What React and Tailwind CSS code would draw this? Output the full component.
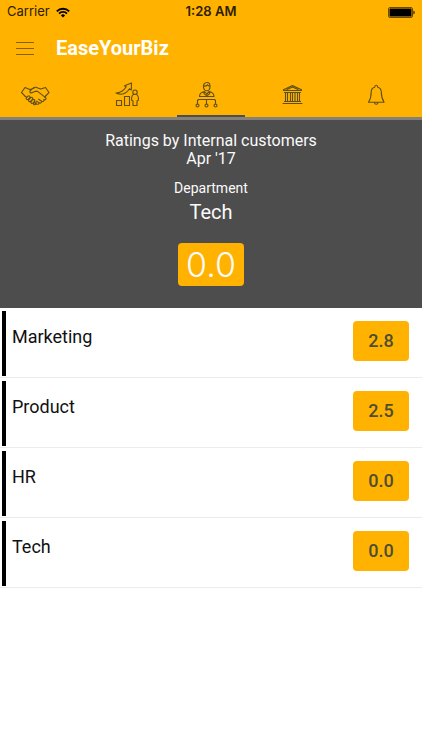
import { useState } from "react";
import clsx from "clsx";

const departments = [
  { id: 1, name: "Marketing", rating: "2.8" },
  { id: 2, name: "Product", rating: "2.5" },
  { id: 3, name: "HR", rating: "0.0" },
  { id: 4, name: "Tech", rating: "0.0" },
];

// every tab icon shares the same 36x28 canvas
function TabIcon({ children }) {
  return (
    <svg
      viewBox="0 0 36 28"
      className="h-7 w-9"
      fill="none"
      stroke="#5e4e18"
      strokeWidth="1.1"
      strokeLinecap="round"
      strokeLinejoin="round"
      aria-hidden="true"
    >
      {children}
    </svg>
  );
}

function HandshakeIcon() {
  return (
    <TabIcon>
      <path d="M5 6.5 1.5 11.5l3 3.2M5 6.5l4.8 2 4.2-1.3M25.5 6.5l3.500 5-3 3.200M25.500 6.500l-4.800 1.600-5-1.800c-1.200-.2-2 .2-2.700.9l-3 2.800c-.7 1.200.6 2.200 2 1.800l3.400-1.600 2.200.2 8 6.200c1.200 1.200-.2 2.600-1.600 2" />
      <path d="m4.500 14.700 2 1.600M26 14.700l-1.200 1.500M24 18.600c.4 1.600-1 2.400-2.400 1.600l-3-2M21.600 20.200c.4 1.600-1.200 2.400-2.400 1.600l-2.700-1.700M19.200 21.800c-.2 1.400-1.600 1.800-2.800 1.200l-1.600-.9" />
      <path d="M6.400 16.800 8 15.200c1.200-1 2.600.2 1.800 1.500l-1.600 1.700c-1.300.8-2.500-.4-1.800-1.600ZM8.800 18.600l2-2c1.200-.8 2.500.4 1.700 1.700l-2 2.100c-1.300.7-2.500-.5-1.700-1.800ZM11.200 20.400l1.600-1.700c1.200-.8 2.500.4 1.700 1.700L13 22.100c-1.300.8-2.600-.4-1.800-1.700ZM13.600 22.200l.8-.9c1.200-.7 2.300.4 1.600 1.500l-.7.7c-1.100.7-2.300-.2-1.700-1.300Z" />
    </TabIcon>
  );
}

function GrowthIcon() {
  return (
    <TabIcon>
      <path d="M11.500 19.500h5v5h-5zM19.500 15.500h5v9h-5z" />
      <path d="M11 12c4.200-.2 8-2.600 10.200-6.200l-1.700-1L26.500 2l-.2 7-1.800-1.200C21.500 12.500 16.500 14.500 11 12Z" />
      <circle cx="30" cy="11.200" r="2.200" />
      <path d="M28.500 13.500c-1.500.5-2 2-2 5.500l1.500 1v4.500h4V20l1.500-1c0-3.500-.5-5-2-5.500" />
    </TabIcon>
  );
}

function OrgIcon() {
  return (
    <TabIcon>
      <path d="M14.500 6.500c-.5-3 1-5 3.500-5 2.300 0 3.300 1.500 3 5-.3 2-1.500 3.300-3.100 3.300s-3-1.300-3.400-3.300ZM14.600 5c1.500.3 3-.3 3.700-1.200.6 1 1.500 1.400 2.600 1.400" />
      <path d="M10.500 15.500c0-3 1.700-4.300 5-5l2.300 2.500 2.400-2.500c3.200.7 4.800 2 4.800 5ZM17.800 13v2.500M15.500 10.500l-.5 2.200 1.800 1.500M20.200 10.500l.5 2.200-1.800 1.500" />
      <path d="M17.500 18.500V23M8.500 23v-3.500l1-1h16l1 1V23" />
      <circle cx="8.500" cy="24.500" r="1.500" />
      <circle cx="17.500" cy="24.500" r="1.500" />
      <circle cx="26.500" cy="24.500" r="1.500" />
    </TabIcon>
  );
}

function BankIcon() {
  return (
    <TabIcon>
      <path d="M10.500 8.800 19.500 4.500l9 4.300v.7h-18zM14 8.500l5.500-2.600L25 8.500" />
      <path d="M11.500 11.500h16M12.500 11.500v9M14.500 11.500v9M17.500 11.500v9M19.500 11.500v9M22 11.500v9M24.500 11.500v9M26.500 11.500v9M11.500 20.500h16M10 22.500h19" />
    </TabIcon>
  );
}

function BellIcon() {
  return (
    <TabIcon>
      <path d="M16.700 6.200c0-1.300.5-2 1.500-2s1.500.7 1.500 2M16.700 6.200c-2.400.6-3.500 2.400-3.500 4.800 0 4.500-.4 6.800-2.700 10.300h15.600c-2.300-3.500-2.800-5.800-2.800-10.300 0-2.400-1.200-4.200-3.600-4.800" />
      <path d="M16.500 21.500c.2 2.400 3.300 2.400 3.500 0" />
    </TabIcon>
  );
}

const tabs = [
  { id: "deals", label: "Deals", icon: HandshakeIcon },
  { id: "growth", label: "Growth", icon: GrowthIcon },
  { id: "departments", label: "Departments", icon: OrgIcon },
  { id: "organisation", label: "Organisation", icon: BankIcon },
  { id: "alerts", label: "Alerts", icon: BellIcon },
];

function StatusBar() {
  return (
    <div className="grid h-6 grid-cols-3 items-center px-[7px] font-['Inter',sans-serif] text-[13px] text-[#2b2000]">
      <div className="flex items-center gap-1.5">
        <span>Carrier</span>
        <svg viewBox="0 0 14 11" className="h-[11px] w-3.5" fill="none" stroke="#000" strokeWidth="1.800" aria-hidden="true">
          <path d="M.8 4.300a8.800 8.800 0 0 1 12.400 0M3 6.600a5.600 5.600 0 0 1 8 0" />
          <path d="M7 10.500 4.900 8.400a3 3 0 0 1 4.200 0Z" fill="#000" stroke="none" />
        </svg>
      </div>
      <span className="text-center font-semibold">1:28 AM</span>
      <svg viewBox="0 0 27 11" className="h-[11px] w-[27px] justify-self-end" aria-hidden="true">
        <rect x=".5" y=".5" width="24" height="10" rx="1.500" fill="none" stroke="#6b4b00" />
        <rect x="1.500" y="1.500" width="22" height="8" rx=".5" fill="#000" />
        <path d="M25.500 3.500c1.500.5 1.500 3.500 0 4Z" fill="#000" />
      </svg>
    </div>
  );
}

export default function App() {
  const [activeTab, setActiveTab] = useState("departments");

  return (
    <div className="min-h-screen bg-white font-['Roboto',sans-serif]">
      <header className="border-b-3 border-[#858176] bg-[#ffb300]">
        <StatusBar />

        <div className="flex h-12 items-center gap-[22px] px-4">
          <button aria-label="Open menu" className="flex h-6 w-[18px] flex-col justify-center gap-[5px]">
            <span className="h-px w-full bg-[#80601a]" />
            <span className="h-px w-full bg-[#80601a]" />
            <span className="h-px w-full bg-[#80601a]" />
          </button>
          <h1 className="text-xl font-bold text-white">EaseYourBiz</h1>
        </div>

        <nav className="grid grid-cols-5">
          {tabs.map(({ id, label, icon: Icon }) => (
            <button
              key={id}
              aria-label={label}
              onClick={() => setActiveTab(id)}
              className="flex h-[45px] flex-col justify-between px-2 pt-[9px]"
            >
              <span className="flex w-full justify-center pr-2">
                <Icon />
              </span>
              <span className={clsx("h-0.5 w-full", activeTab === id && "bg-[#4d4d4d]")} />
            </button>
          ))}
        </nav>
      </header>

      <main>
        <section className="flex flex-col items-center bg-[#4d4d4d] pt-3 pb-[22px] text-[#fafafa]">
          <h2 className="text-center text-base leading-[18px]">
            Ratings by Internal customers
            <br />
            Apr '17
          </h2>
          <p className="mt-2.5 text-sm leading-5">Department</p>
          <p className="mt-0.5 text-xl leading-6">Tech</p>
          <div className="mt-[19px] rounded bg-[#ffb300] px-2 font-['Inter',sans-serif] text-[34px] leading-[43px] font-light">
            0.0
          </div>
        </section>

        <ul>
          {departments.map((dept) => (
            <li
              key={dept.id}
              className="flex h-[70px] border-b border-[#ececec] pt-[3px] pr-[13px] pb-px pl-0.5"
            >
              <div className="flex flex-1 border-l-4 border-black pt-3.5 pl-1.5">
                <span className="text-lg leading-6 text-[#111111]">{dept.name}</span>
              </div>
              <span className="mt-2.5 h-10 w-14 rounded bg-[#ffb300] text-center text-lg leading-10 font-medium text-[#4d4d33]">
                {dept.rating}
              </span>
            </li>
          ))}
        </ul>
      </main>
    </div>
  );
}
